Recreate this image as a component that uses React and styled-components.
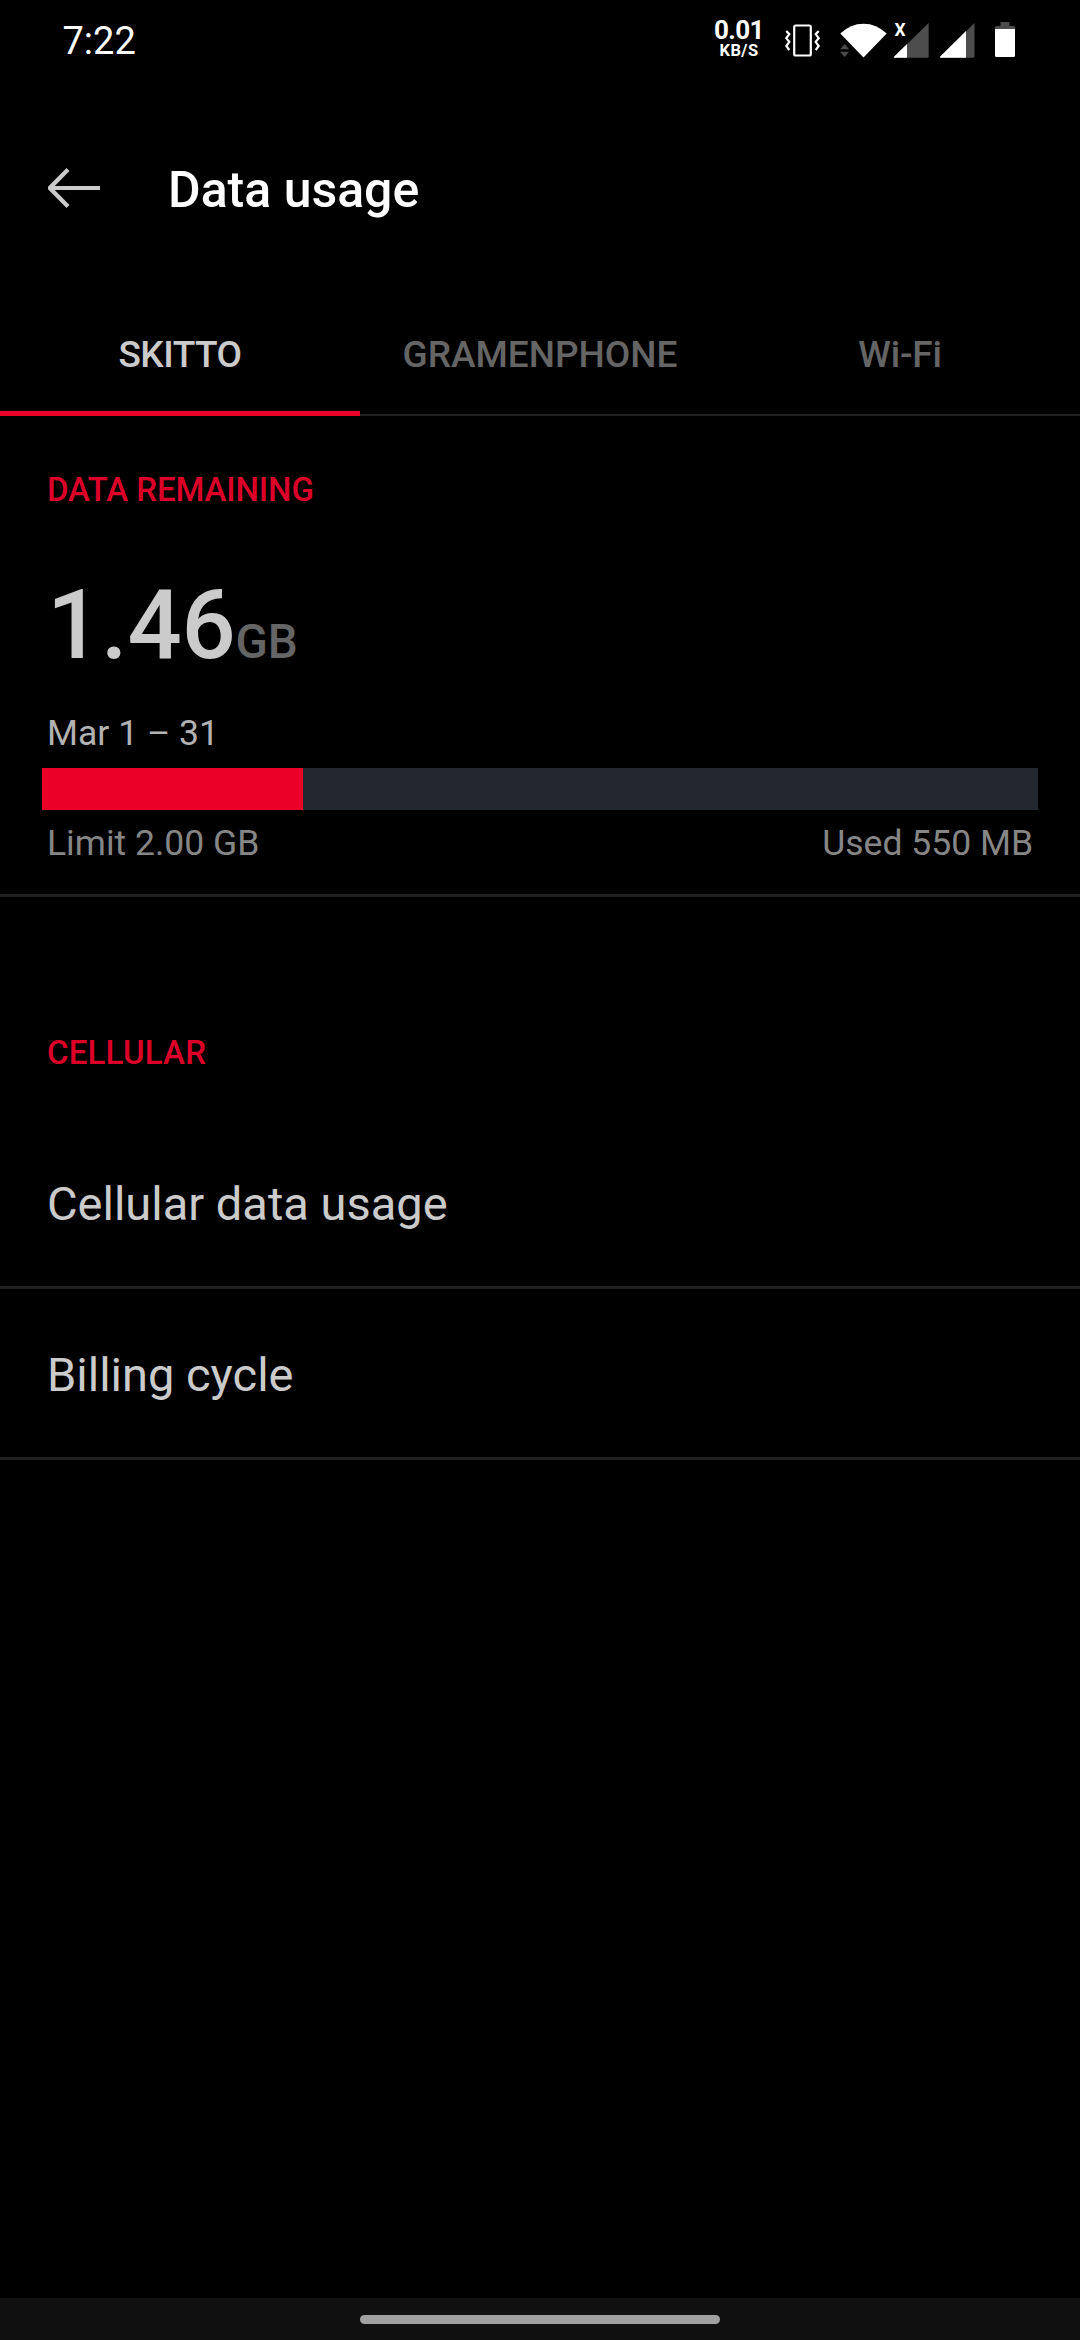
import React from "react";
import styled, { createGlobalStyle } from "styled-components";

const GlobalStyle = createGlobalStyle`
  *, *::before, *::after { box-sizing: border-box; }
  html, body { margin: 0; padding: 0; background: #000; }
  body { font-family: Roboto, "Noto Sans", sans-serif; }
`;

const Screen = styled.div`
  display: flex;
  flex-direction: column;
  width: 1080px;
  height: 2340px;
  background: #000;
  color: #cbcbcb;
  overflow: hidden;
`;

const StatusBar = styled.div`
  display: flex;
  justify-content: space-between;
  height: 82px;
  padding: 0 65px 0 62.5px;
  color: #fff;
`;

const Clock = styled.span`
  font-size: 38px;
  line-height: 83px;
`;

const StatusIcons = styled.div`
  display: flex;
  align-items: flex-start;
`;

const Speed = styled.div`
  display: flex;
  flex-direction: column;
  align-items: center;
  width: 48px;
  margin-right: 22px;
  padding-top: 17px;
  font-weight: 700;
  white-space: nowrap;
`;

const SpeedValue = styled.span`
  font-size: 26px;
  line-height: 26px;
  letter-spacing: -0.6px;
`;

const SpeedUnit = styled.span`
  font-size: 16.5px;
  line-height: 15px;
  letter-spacing: 0.4px;
`;

const Icon = styled.svg`
  display: block;
  flex: none;
  width: ${(p) => p.$w}px;
  height: 82px;
  margin-right: ${(p) => p.$gap || 0}px;
`;

const NoServiceMark = styled.text`
  font-size: 17.5px;
  font-weight: 700;
`;

const Header = styled.header`
  display: flex;
  align-items: center;
  height: 215px;
  padding-left: 48px;
`;

const BackArrow = styled.svg`
  width: 52px;
  height: 40px;
  margin: 0 68px 4px 0;
`;

const Title = styled.h1`
  margin: 0;
  color: #fff;
  font-size: 50px;
  font-weight: 500;
  line-height: 60px;
`;

const Tabs = styled.nav`
  display: grid;
  grid-template-columns: repeat(3, 1fr);
  height: 119px;
  background: linear-gradient(#1f1f1f, #1f1f1f) bottom / 100% 2px no-repeat;
`;

const Tab = styled.div`
  padding-top: 1px;
  border-bottom: 5px solid ${(p) => (p.$active ? "#e60027" : "transparent")};
  color: ${(p) => (p.$active ? "#cbcbcb" : "#656565")};
  font-size: 37px;
  font-weight: 500;
  letter-spacing: ${(p) => p.$tracking || 0}px;
  line-height: 113px;
  text-align: center;
`;

const Summary = styled.section`
  padding: 54px 42px 31px;
  border-bottom: 3px solid #1f1f1f;
`;

const SectionTitle = styled.h2`
  margin: 0;
  padding-left: ${(p) => p.$inset}px;
  color: #dc0028;
  font-size: 33px;
  font-weight: 500;
  letter-spacing: ${(p) => p.$tracking || 0}px;
  line-height: 40px;
`;

const Remaining = styled.div`
  margin-top: 67px;
  padding-left: 5px;
  font-size: 95.5px;
  font-weight: 500;
  letter-spacing: -0.2px;
  line-height: 96px;
`;

const Unit = styled.span`
  color: #656565;
  font-size: 47.5px;
  line-height: 48px;
`;

const Period = styled.div`
  margin-top: 40px;
  padding-left: 5px;
  color: #b2b2b2;
  font-size: 35.5px;
  line-height: 40px;
`;

const Meter = styled.div`
  height: 42px;
  margin-top: 15px;
  background: #23272f;
`;

const MeterFill = styled.div`
  width: 261px;
  height: 100%;
  background: #eb0028;
`;

const Limits = styled.div`
  display: flex;
  justify-content: space-between;
  margin-top: 13px;
  padding: 0 5px;
  color: #868686;
  font-size: 35.5px;
  line-height: 40px;
`;

const Cellular = styled.section`
  flex: 1;
  padding-top: 136px;
`;

const List = styled.div`
  margin-top: 45px;
`;

const Row = styled.div`
  height: 171px;
  padding: 2px 47px 0;
  border-bottom: 3px solid #1f1f1f;
  font-size: 47px;
  line-height: 167px;
`;

const NavBar = styled.div`
  display: flex;
  justify-content: center;
  height: 42px;
  padding-top: 17px;
  background: #101010;
`;

const Pill = styled.div`
  width: 360px;
  height: 9px;
  border-radius: 5px;
  background: #a0a0a0;
`;

export default function App() {
  return (
    <>
      <GlobalStyle />
      <Screen>
        <StatusBar>
          <Clock>7:22</Clock>
          <StatusIcons>
            <Speed>
              <SpeedValue>0.01</SpeedValue>
              <SpeedUnit>KB/S</SpeedUnit>
            </Speed>
            <Icon $w={36} $gap={19} viewBox="785 0 36 82" fill="none" stroke="#fff" strokeWidth="2.2">
              <rect x="794.2" y="25.5" width="16.6" height="30" rx="1.5" />
              <path d="M786.3 31l3 3.2-3 4 3 3.600-3 4.200 3 4M818.700 31l-3 3.200 3 4-3 3.600 3 4.200-3 4" />
            </Icon>
            <Icon $w={47} $gap={6} viewBox="840 0 47 82" fill="#fff">
              <path d="M840.300 33.500Q850.500 23.700 863.500 23.700T886.700 33.500L863.500 57.500Z" />
              <path d="M840 49.200h9.200L844.600 44zM840 51.800h9.200L844.600 57z" fill="#4b4b4b" />
            </Icon>
            <Icon $w={36} $gap={11} viewBox="893 0 36 82" fill="#fff">
              <path d="M928.700 23v33.200q0 1.500-1.500 1.500H895q-2 0-.5-1.500z" fill="#4d4d4d" />
              <path d="M907 44v13.700H895q-2 0-.5-1.500z" />
              <NoServiceMark x="894.5" y="35.700">X</NoServiceMark>
            </Icon>
            <Icon $w={36} $gap={19} viewBox="940 0 36 82" fill="#fff">
              <path d="M974.500 23v33.200q0 1.500-1.500 1.500H941q-2 0-.5-1.500z" fill="#4d4d4d" />
              <path d="M966 31v26.700H941q-2 0-.5-1.500z" />
            </Icon>
            <Icon $w={20} viewBox="995 0 20 82" fill="#fff">
              <path d="M995 29v-1.500q0-1.500 1.500-1.500h4v-4h9v4h4q1.500 0 1.500 1.500V29z" fill="#4d4d4d" />
              <path d="M995 29h20v26.500q0 1.500-1.500 1.500h-17q-1.500 0-1.500-1.500z" />
            </Icon>
          </StatusIcons>
        </StatusBar>
        <Header>
          <BackArrow viewBox="0 0 52 40" fill="none" stroke="#cbcbcb" strokeWidth="4.2">
            <path d="M20 1.500L1.800 20 20 38.500M2 20H52" />
          </BackArrow>
          <Title>Data usage</Title>
        </Header>
        <Tabs>
          <Tab $active $tracking={-0.5}>SKITTO</Tab>
          <Tab>GRAMENPHONE</Tab>
          <Tab $tracking={-0.2}>Wi-Fi</Tab>
        </Tabs>
        <Summary>
          <SectionTitle $inset={5} $tracking={-0.1}>DATA REMAINING</SectionTitle>
          <Remaining>
            1.46<Unit>GB</Unit>
          </Remaining>
          <Period>Mar 1 – 31</Period>
          <Meter>
            <MeterFill />
          </Meter>
          <Limits>
            <span>Limit 2.00 GB</span>
            <span>Used 550 MB</span>
          </Limits>
        </Summary>
        <Cellular>
          <SectionTitle $inset={47} $tracking={0.2}>CELLULAR</SectionTitle>
          <List>
            <Row>Cellular data usage</Row>
            <Row>Billing cycle</Row>
          </List>
        </Cellular>
        <NavBar>
          <Pill />
        </NavBar>
      </Screen>
    </>
  );
}
